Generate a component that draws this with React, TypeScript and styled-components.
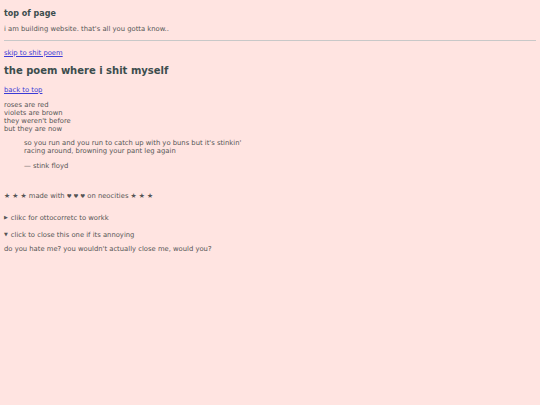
import styled, { createGlobalStyle } from 'styled-components';

const GlobalStyle = createGlobalStyle`
    html, body {
        margin: 0;
        padding: 0;
        background: #ffe4e1;
    }
    body {
        padding: 4px;
        font-family: "DejaVu Sans", Verdana, sans-serif;
        font-size: 6.8px;
        line-height: 1.2;
        color: #555;
    }
`;

const Page = styled.main`
    display: flex;
    flex-direction: column;
`;

const Header = styled.header`
    padding-top: 1px;
`;

const SiteTitle = styled.h3`
    margin: 4px 0 0;
    font-size: 8px;
    font-weight: bold;
    color: #3c4d4d;
`;

const Tagline = styled.p`
    margin: 6px 0 0;
`;

const Rule = styled.hr`
    margin: 7px 0 0;
    border: 0;
    border-top: 1px solid #c8c8c8;
`;

const Link = styled.a<{ $gap: number }>`
    color: #3b3bd6;
    text-decoration: underline;
    margin-top: ${({ $gap }) => $gap}px;
    align-self: flex-start;
`;

const PoemTitle = styled.h2`
    margin: 8px 0 0;
    font-size: 10px;
    font-weight: bold;
    color: #3c4d4d;
`;

const Stanza = styled.p`
    margin: 7px 0 0;
    line-height: 8px;
`;

const Quote = styled.blockquote`
    margin: 6px 0 0 20px;
    line-height: 8px;
`;

const Cite = styled.p`
    margin: 7px 0 0;
`;

const Footer = styled.p`
    margin: 22px 0 0;
`;

const Heart = styled.span`
    font-size: 5.5px;
`;

const Fold = styled.details<{ $gap: number }>`
    margin-top: ${({ $gap }) => $gap}px;

    summary {
        list-style: none;
        cursor: pointer;
    }
    summary::-webkit-details-marker {
        display: none;
    }
    summary::before {
        content: '▶';
        font-size: 5px;
        margin-right: 3px;
        vertical-align: 1px;
    }
    &[open] summary::before {
        content: '▼';
    }
`;

const FoldText = styled.p`
    margin: 5px 0 0;
`;

export default function App() {
    return (
        <>
            <GlobalStyle />
            <Page>
                <Header>
                    <SiteTitle>top of page</SiteTitle>
                    <Tagline>i am building website. that's all you gotta know..</Tagline>
                </Header>
                <Rule />
                <Link $gap={8} href="#poem">skip to shit poem</Link>
                <PoemTitle id="poem">the poem where i shit myself</PoemTitle>
                <Link $gap={9} href="#top">back to top</Link>
                <Stanza>
                    roses are red<br />
                    violets are brown<br />
                    they weren't before<br />
                    but they are now
                </Stanza>
                <Quote>
                    so you run and you run to catch up with yo buns but it's stinkin'<br />
                    racing around, browning your pant leg again
                    <Cite>— stink floyd</Cite>
                </Quote>
                <Footer>
                    ★ ★ ★ made with <Heart>♥ ♥ ♥</Heart> on neocities ★ ★ ★
                </Footer>
                <Fold $gap={14}>
                    <summary>clikc for ottocorretc to workk</summary>
                    <FoldText>lol</FoldText>
                </Fold>
                <Fold $gap={9} open>
                    <summary>click to close this one if its annoying</summary>
                    <FoldText>do you hate me? you wouldn't actually close me, would you?</FoldText>
                </Fold>
            </Page>
        </>
    );
}
